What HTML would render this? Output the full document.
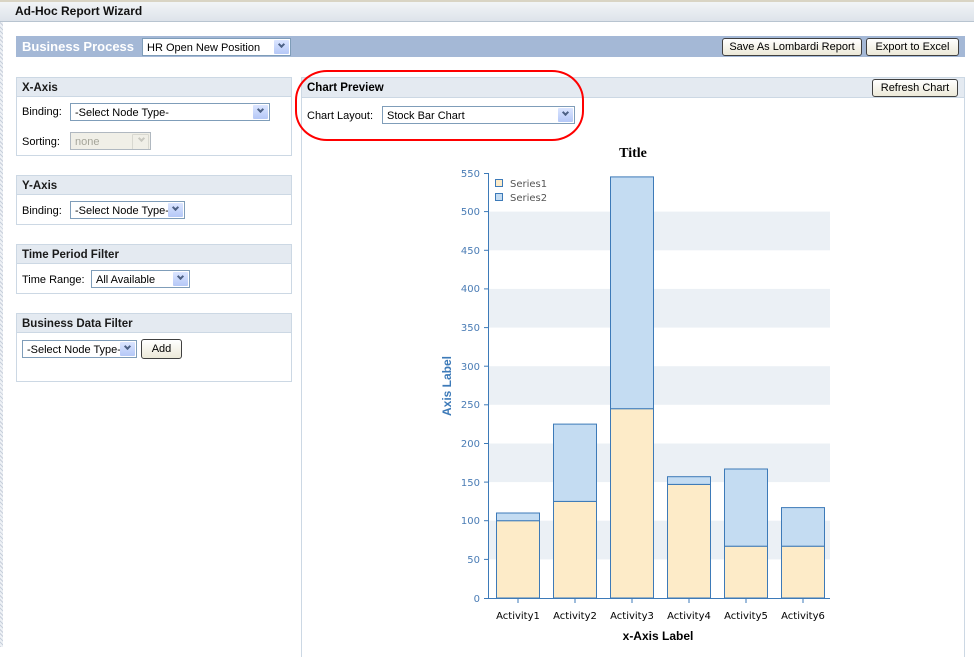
<!DOCTYPE html>
<html><head><meta charset="utf-8"><style>
*{box-sizing:border-box}
body{margin:0;width:974px;height:647px;overflow:hidden;background:#fff;font-family:"Liberation Sans",sans-serif;font-size:11px;color:#000;position:relative}
.a{position:absolute}
.sel{position:absolute;height:18px;border:1px solid #7f9db9;background:#fff;font-size:11px;padding:3px 0 0 4px;white-space:nowrap;overflow:hidden}
.sel:after{content:"";position:absolute;right:1px;top:1px;width:15px;height:14px;background:#c3d3fd linear-gradient(#dbe5ff,#b5c8f7);border-radius:1px}
.sel i{position:absolute;right:6px;top:3px;border-right:2px solid #4d6185;border-bottom:2px solid #4d6185;transform:rotate(45deg);z-index:1;width:5px;height:5px}
.sel.dis{background:#f0efe7;color:#a5a59a;border-color:#b0b8c0}
.sel.dis:after{background:#f0efe7;border:1px solid #d8d8d0}
.sel.dis i{border-color:#c8c8c0}
.btn{position:absolute;height:18px;border:1px solid #404040;border-radius:3px;background:linear-gradient(#fff,#ece9d8);font-size:11px;text-align:center;line-height:17px;white-space:nowrap}
.box{position:absolute;border:1px solid #ccd8e4;background:#fff}
.hd{height:19px;background:#e4eaf1;border-bottom:1px solid #ccd8e4;font-weight:bold;font-size:11.5px;padding:4px 0 0 5px;color:#1a1a1a}
.lbl{position:absolute;font-size:11px}
</style></head><body>
<div class="a" style="left:0;top:0;width:974px;height:22px;background:linear-gradient(#f4f6f8,#dde3ea);border-bottom:1px solid #b8c4d0"></div>
<div class="a" style="left:0;top:0;width:974px;height:2px;background:#d9d4c4"></div>
<div class="a" style="left:15px;top:4px;font-weight:bold;font-size:12px;color:#111">Ad-Hoc Report Wizard</div>
<div class="a" style="left:0;top:22px;width:3px;height:625px;background:repeating-linear-gradient(45deg,#c8d0dc 0 1px,#eef1f5 1px 3px)"></div>

<div class="a" style="left:16px;top:36px;width:949px;height:21px;background:#a4b8d6"></div>
<div class="a" style="left:22px;top:39px;font-weight:bold;font-size:13px;color:#fff">Business Process</div>
<div class="sel" style="left:142px;top:38px;width:149px">HR Open New Position<i></i></div>
<div class="btn" style="left:722px;top:38px;width:140px">Save As Lombardi Report</div>
<div class="btn" style="left:866px;top:38px;width:93px">Export to Excel</div>

<div class="box" style="left:16px;top:77px;width:276px;height:79px"><div class="hd">X-Axis</div></div>
<div class="lbl" style="left:22px;top:106px">Binding:</div>
<div class="sel" style="left:70px;top:103px;width:200px">-Select Node Type-<i></i></div>
<div class="lbl" style="left:22px;top:136px">Sorting:</div>
<div class="sel dis" style="left:70px;top:132px;width:81px">none<i></i></div>

<div class="box" style="left:16px;top:175px;width:276px;height:50px"><div class="hd">Y-Axis</div></div>
<div class="lbl" style="left:22px;top:205px">Binding:</div>
<div class="sel" style="left:70px;top:201px;width:115px">-Select Node Type-<i></i></div>

<div class="box" style="left:16px;top:244px;width:276px;height:50px"><div class="hd">Time Period Filter</div></div>
<div class="lbl" style="left:22px;top:274px">Time Range:</div>
<div class="sel" style="left:91px;top:270px;width:99px">All Available<i></i></div>

<div class="box" style="left:16px;top:313px;width:276px;height:69px"><div class="hd">Business Data Filter</div></div>
<div class="sel" style="left:22px;top:340px;width:115px">-Select Node Type-<i></i></div>
<div class="btn" style="left:141px;top:339px;width:41px;height:20px;line-height:19px">Add</div>

<div class="a" style="left:301px;top:77px;width:664px;height:580px;border:1px solid #ccd8e4;border-bottom:none"></div>
<div class="a" style="left:302px;top:78px;width:662px;height:20px;background:#e4eaf1;border-bottom:1px solid #ccd8e4"></div>
<div class="a" style="left:307px;top:82px;font-weight:bold;font-size:11.5px">Chart Preview</div>
<div class="btn" style="left:872px;top:79px;width:86px">Refresh Chart</div>
<div class="lbl" style="left:307px;top:110px">Chart Layout:</div>
<div class="sel" style="left:382px;top:106px;width:193px">Stock Bar Chart<i></i></div>
<div class="a" style="left:295px;top:70px;width:289px;height:71px;border:2px solid #f00;border-radius:32px/30px"></div>

<svg class="a" style="left:0;top:0" width="974" height="647" font-family="'DejaVu Sans',sans-serif">
<g fill="#ebf0f5">
<rect x="489" y="211.6" width="341" height="38.7"/><rect x="489" y="288.9" width="341" height="38.7"/><rect x="489" y="366.2" width="341" height="38.6"/><rect x="489" y="443.5" width="341" height="38.6"/><rect x="489" y="520.7" width="341" height="38.7"/>
</g>
<text x="633" y="157" font-family="'Liberation Serif',serif" font-weight="bold" font-size="14" text-anchor="middle">Title</text>
<g stroke="#3d7ab8" stroke-width="1">
<line x1="488.5" y1="173" x2="488.5" y2="598"/><line x1="484" y1="598.5" x2="830" y2="598.5"/>
<g fill="#fdebc8">
<rect x="496.5" y="520.7" width="43" height="77.3"/><rect x="553.5" y="501.4" width="43" height="96.6"/><rect x="610.5" y="408.7" width="43" height="189.3"/><rect x="667.5" y="484.4" width="43" height="113.6"/><rect x="724.5" y="546.2" width="43" height="51.8"/><rect x="781.5" y="546.2" width="43" height="51.8"/>
</g>
<g fill="#c4dcf2">
<rect x="496.5" y="513" width="43" height="7.7"/><rect x="553.5" y="424.1" width="43" height="77.3"/><rect x="610.5" y="176.9" width="43" height="231.8"/><rect x="667.5" y="476.7" width="43" height="7.7"/><rect x="724.5" y="469" width="43" height="77.2"/><rect x="781.5" y="507.6" width="43" height="38.6"/>
</g>
<rect x="495.5" y="179.5" width="7" height="7" fill="#fdebc8"/><rect x="495.5" y="193.5" width="7" height="7" fill="#c4dcf2"/>
<g><line x1="484" x2="488" y1="173.5" y2="173.5"/><line x1="484" x2="488" y1="211.6" y2="211.6"/><line x1="484" x2="488" y1="250.3" y2="250.3"/><line x1="484" x2="488" y1="288.9" y2="288.9"/><line x1="484" x2="488" y1="327.6" y2="327.6"/><line x1="484" x2="488" y1="366.2" y2="366.2"/><line x1="484" x2="488" y1="404.8" y2="404.8"/><line x1="484" x2="488" y1="443.5" y2="443.5"/><line x1="484" x2="488" y1="482.1" y2="482.1"/><line x1="484" x2="488" y1="520.7" y2="520.7"/><line x1="484" x2="488" y1="559.4" y2="559.4"/></g>
<g><line x1="518" x2="518" y1="598" y2="603"/><line x1="575" x2="575" y1="598" y2="603"/><line x1="632" x2="632" y1="598" y2="603"/><line x1="689" x2="689" y1="598" y2="603"/><line x1="746" x2="746" y1="598" y2="603"/><line x1="803" x2="803" y1="598" y2="603"/></g>
</g>
<g fill="#555" font-size="10"><text x="510" y="187">Series1</text><text x="510" y="201">Series2</text></g>
<g fill="#4a7cb5" font-size="10" text-anchor="end">
<text x="480" y="177">550</text><text x="480" y="215">500</text><text x="480" y="254">450</text><text x="480" y="292">400</text><text x="480" y="331">350</text><text x="480" y="370">300</text><text x="480" y="408">250</text><text x="480" y="447">200</text><text x="480" y="486">150</text><text x="480" y="524">100</text><text x="480" y="563">50</text><text x="480" y="602">0</text>
</g>
<g fill="#000" font-size="10" text-anchor="middle">
<text x="518" y="619">Activity1</text><text x="575" y="619">Activity2</text><text x="632" y="619">Activity3</text><text x="689" y="619">Activity4</text><text x="746" y="619">Activity5</text><text x="803" y="619">Activity6</text>
</g>
<text x="658" y="640" font-size="12" font-weight="bold" text-anchor="middle" font-family="'Liberation Sans',sans-serif">x-Axis Label</text>
<text transform="translate(451,386) rotate(-90)" font-size="12" font-weight="bold" fill="#3d7ab8" text-anchor="middle" font-family="'Liberation Sans',sans-serif">Axis Label</text>
</svg>
</body></html>
